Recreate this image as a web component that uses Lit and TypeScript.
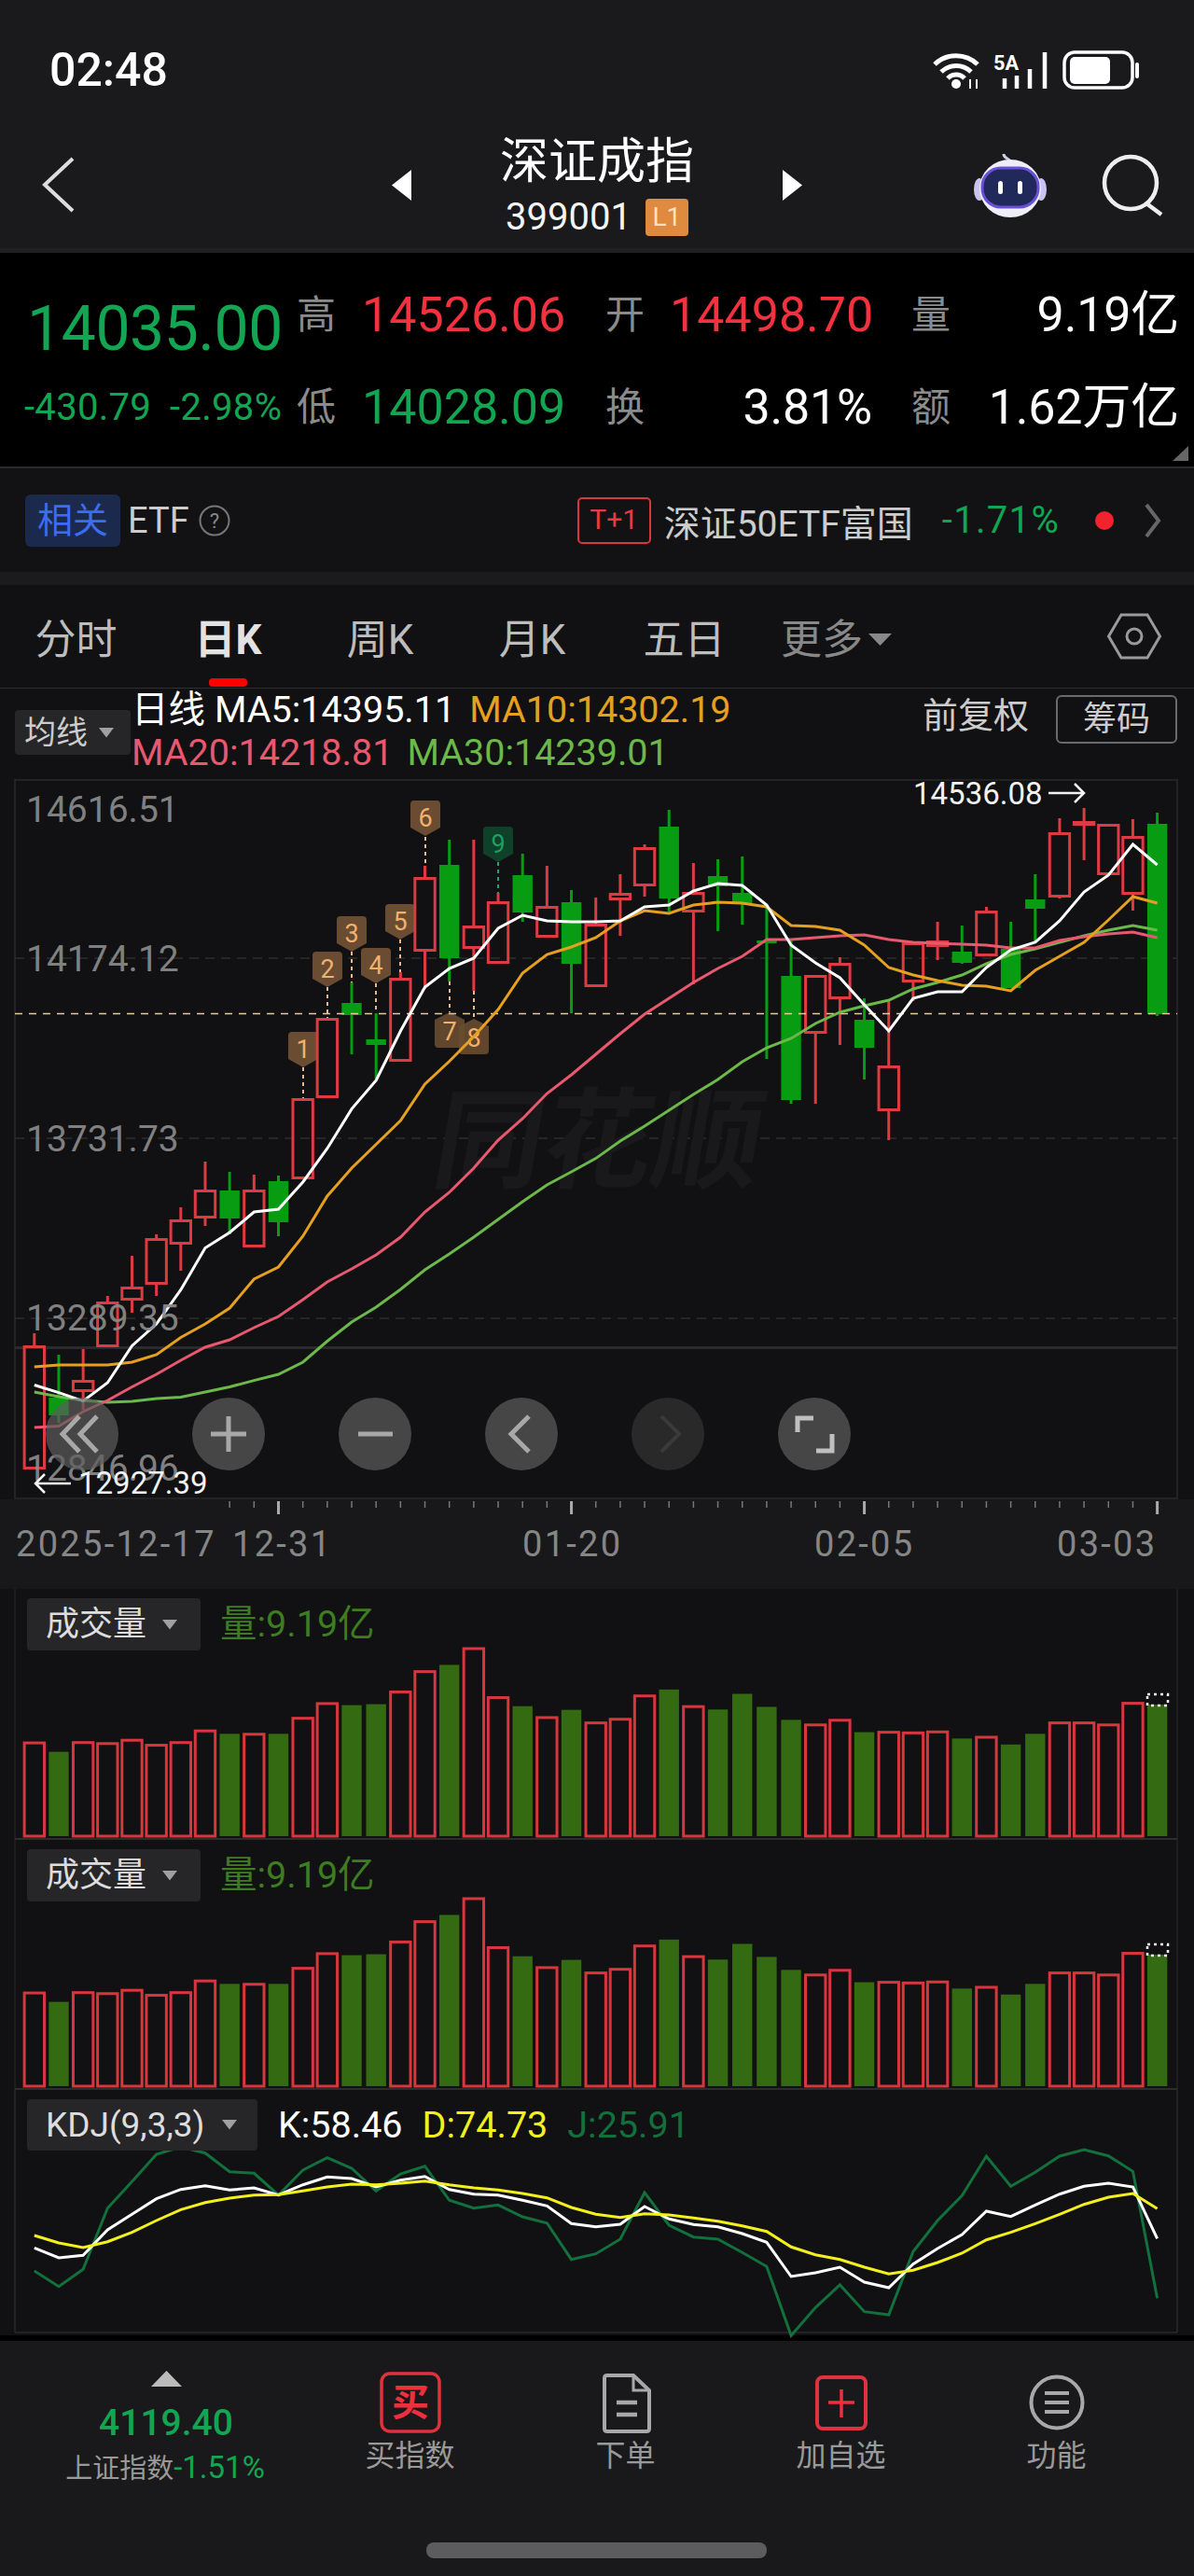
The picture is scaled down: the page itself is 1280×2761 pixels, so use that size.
import { LitElement, html, css, svg } from "lit";
import { customElement } from "lit/decorators.js";

const RED = "#dd3a41";
const GREEN = "#079c12";
const VOL_GREEN = "#336a12";
const X = (i: number) => 36.8 + 26.17 * i;

// [isRed, wickTop, bodyTop, bodyBottom, wickBottom]
const candles: [number, number, number, number, number][] = [
  [1, 1429, 1442, 1575, 1575], [0, 1452, 1498, 1517, 1525], [1, 1446, 1479, 1492, 1511], [1, 1389, 1395, 1444, 1444],
  [1, 1346, 1379, 1394, 1407], [1, 1323, 1327, 1377, 1389], [1, 1294, 1307, 1334, 1362], [1, 1245, 1275, 1306, 1314],
  [0, 1256, 1276, 1306, 1323], [1, 1259, 1275, 1337, 1337], [0, 1260, 1266, 1310, 1325], [1, 1177, 1177, 1264, 1264],
  [1, 1091, 1091, 1177, 1177], [0, 1053, 1075, 1088, 1130], [0, 1086, 1114, 1120, 1156], [1, 1042, 1048, 1138, 1138],
  [1, 928, 940, 1020, 1060], [0, 900, 927, 1027, 1052], [1, 900, 992, 1017, 1062], [1, 957, 966, 1033, 1033],
  [0, 915, 938, 978, 988], [1, 928, 971, 1005, 1005], [0, 954, 967, 1033, 1086], [1, 962, 990, 1058, 1058],
  [1, 937, 957, 965, 1003], [1, 905, 908, 950, 961], [0, 868, 886, 963, 977], [1, 925, 956, 978, 1055],
  [0, 921, 939, 950, 998], [0, 918, 957, 968, 991], [0, 970, 1008, 1011, 1135], [0, 1007, 1046, 1179, 1183],
  [1, 1045, 1045, 1108, 1183], [1, 1026, 1032, 1071, 1120], [0, 1070, 1093, 1123, 1157], [1, 1073, 1142, 1191, 1222],
  [1, 1010, 1010, 1053, 1073], [1, 988, 1008, 1015, 1029], [0, 992, 1020, 1032, 1033], [1, 972, 976, 1025, 1025],
  [0, 988, 1017, 1059, 1059], [0, 937, 964, 974, 1010], [1, 877, 892, 962, 963], [1, 866, 880, 885, 922],
  [1, 883, 883, 938, 938], [1, 878, 896, 959, 976], [0, 871, 883, 1087, 1089],
];

const ma5 = [1484.5, 1492.6, 1501.6, 1482, 1442.4, 1419, 1382.4, 1337.5, 1321, 1299, 1296, 1267, 1231, 1188.6, 1158, 1105, 1058, 1038, 1027, 995, 981, 987, 988, 988, 987, 972, 970, 955, 947, 949, 970, 1013, 1032, 1048, 1077, 1105, 1070, 1063, 1063, 1037, 1018, 1010, 987, 956, 938, 905, 927];
const ma10 = [1465, 1463, 1463, 1463, 1460, 1452, 1433.5, 1419, 1402, 1371, 1358, 1325, 1282, 1252, 1226.5, 1201, 1162, 1137.5, 1111, 1082, 1043, 1023, 1015, 1005, 987, 976, 979, 970, 967, 968, 972, 992, 993, 997, 1013, 1037, 1045, 1051, 1056, 1057, 1062, 1040, 1025, 1010, 986, 961, 968];
const ma20 = [1530, 1528.6, 1513, 1501, 1486.5, 1473, 1458, 1444, 1436, 1423, 1411, 1393, 1374, 1360, 1345, 1326, 1299, 1278, 1252, 1222, 1199, 1172, 1152, 1130, 1108, 1087, 1070, 1053, 1038, 1025, 1007, 1007, 1005, 1003, 1002, 1007, 1010, 1011, 1012, 1013, 1016, 1016, 1008, 1004, 1001, 999, 1005];
const ma30 = [1492, 1497, 1501, 1503, 1502, 1499, 1497.5, 1492, 1486.5, 1479.6, 1473, 1460, 1437.5, 1417, 1401, 1382, 1361, 1344, 1326, 1307, 1288, 1270, 1256, 1241.6, 1223, 1207, 1190, 1173, 1157, 1138, 1123, 1113, 1097, 1085, 1078, 1072, 1060, 1053, 1045, 1033, 1023, 1017, 1010, 1003, 997, 992, 997];

// bar tops as read off the crop, base line = 750 at 2.8x
const volTops = [466, 497, 465, 468, 458, 473, 465, 430, 443, 440, 443, 392, 348, 357, 354, 313, 252, 236, 183, 330, 360, 390, 371, 406, 395, 325, 310, 357, 370, 323, 362, 401, 412, 398, 438, 434, 436, 433, 457, 449, 475, 443, 406, 406, 412, 347, 355];

const kLine = [508, 540, 532, 450, 400, 350, 320, 308, 322, 315, 338, 305, 280, 285, 312, 290, 278, 320, 335, 338, 355, 373, 430, 440, 432, 375, 415, 433, 440, 462, 490, 600, 588, 570, 618, 636, 560, 510, 465, 390, 407, 370, 335, 310, 300, 312, 478];
const dLine = [468, 492, 507, 488, 458, 420, 385, 362, 348, 338, 337, 325, 312, 303, 305, 300, 293, 305, 315, 322, 333, 347, 378, 400, 410, 398, 402, 412, 422, 437, 455, 505, 530, 545, 570, 592, 580, 555, 525, 482, 458, 430, 400, 368, 345, 333, 382];
const jLine = [582, 632, 577, 380, 295, 207, 183, 203, 263, 268, 338, 258, 218, 252, 325, 270, 245, 355, 380, 370, 408, 428, 545, 527, 480, 330, 435, 473, 480, 523, 568, 790, 700, 627, 713, 723, 520, 420, 340, 213, 310, 265, 213, 192, 212, 262, 670];

// label, centre x, top y, pointing up?, dotted line from/to
const tags: { t: string; x: number; y: number; up?: boolean; green?: boolean; d: [number, number] }[] = [
  { t: "1", x: 325, y: 1106, d: [1144, 1177] },
  { t: "2", x: 351, y: 1020, d: [1058, 1091] },
  { t: "3", x: 377, y: 982, d: [1020, 1053] },
  { t: "4", x: 403, y: 1016, d: [1054, 1086] },
  { t: "5", x: 429, y: 969, d: [1007, 1042] },
  { t: "6", x: 456, y: 858, d: [897, 928] },
  { t: "7", x: 482, y: 1085, up: true, d: [1052, 1085] },
  { t: "8", x: 508, y: 1092, up: true, d: [1062, 1092] },
  { t: "9", x: 534, y: 886, green: true, d: [924, 957] },
];

const axisLabels: [string, number][] = [["14616.51", 881], ["14174.12", 1041], ["13731.73", 1234], ["13289.35", 1426], ["12846.96", 1587]];
const gridYs = [1027, 1220, 1413];
const dates: [string, number][] = [["2025-12-17", 17], ["12-31", 249], ["01-20", 560], ["02-05", 873], ["03-03", 1133]];

const linePts = (ys: number[]) => ys.map((y, i) => `${X(i).toFixed(1)},${y}`).join(" ");
const tagPath = (cx: number, y: number, up?: boolean) => {
  const l = cx - 16, r = cx + 16;
  return up
    ? `M${cx} ${y}L${r} ${y + 8}V${y + 34}q0 4 -4 4H${l + 4}q-4 0 -4 -4V${y + 8}Z`
    : `M${l + 4} ${y}H${r - 4}q4 0 4 4V${y + 29}L${cx} ${y + 38}L${l} ${y + 29}V${y + 4}q0 -4 4 -4Z`;
};

@customElement("app-root")
export class AppRoot extends LitElement {
  static styles = css`
    :host {
      display: block;
      width: 1280px;
      height: 2761px;
      overflow: hidden;
      background: #111113;
      font-family: Roboto, "Noto Sans CJK SC", sans-serif;
      color: #ddd;
    }
    svg { display: block; overflow: visible; }
    svg text { font-family: Roboto, "Noto Sans CJK SC", sans-serif; }

    /* top bar */
    .top { height: 271px; background: #1a1a1c; box-sizing: border-box; border-bottom: 5px solid #202022; }
    .status { height: 130px; padding: 10px 58px 0 53px; display: flex; align-items: center; justify-content: space-between; }
    .time { font-size: 50px; font-weight: 500; color: #fff; }
    .nav { display: grid; grid-template-columns: 1fr 440px 1fr; align-items: center; height: 116px; padding: 0 33px; }
    .back { margin-left: 12px; }
    .nav-r { display: flex; justify-content: flex-end; gap: 59px; align-items: center; }
    .mid { display: flex; justify-content: space-between; align-items: center; }
    .title { text-align: center; }
    .title h1 { margin: 0 0 7px; font-size: 52px; line-height: 62px; font-weight: 400; color: #fff; }
    .code { display: flex; align-items: center; justify-content: center; gap: 15px; font-size: 40px; line-height: 42px; color: #f4f4f4; }
    .lvl { width: 46px; height: 40px; background: #df8a3e; border-radius: 4px; font-size: 28px; line-height: 40px; text-align: center; color: #f9dfc4; }

    /* quote block */
    .quote { height: 231px; box-sizing: border-box; background: #000; border-bottom: 2px solid #2a2a2c; position: relative; display: flex; }
    .quote-l { width: 318px; box-sizing: border-box; padding: 44px 0 0 29px; color: #13a652; }
    .last { font-size: 66px; line-height: 76px; letter-spacing: -0.4px; }
    .chg { font-size: 40px; line-height: 46px; margin: 23px 0 0 -3px; display: flex; gap: 20px; letter-spacing: 0.3px; white-space: nowrap; }
    .grid { display: grid; grid-template-columns: 70px 261px 69px 259px 60px 227px; grid-auto-rows: 99px; padding-top: 42px; font-size: 52px; line-height: 50px; }
    .grid .lab { font-size: 42px; color: #8b8b8b; }
    .grid .r { color: #f2323f; }
    .grid .g { color: #13a652; }
    .grid .w { color: #fff; }
    .w.end { text-align: right; width: 217px; }
    .w.far { text-align: right; }
    .far, .end { letter-spacing: -0.2px; }
    .corner { position: absolute; right: 6px; bottom: 6px; }

    /* etf row */
    .etf { height: 111px; background: #121214; display: flex; align-items: center; padding: 0 35px 0 27px; font-size: 38px; color: #ccc; }
    .rel { width: 102px; height: 56px; line-height: 56px; text-align: center; background: #1b2a4c; color: #3c6cf0; border-radius: 6px; margin-right: 8px; }
    .help { margin-left: 10px; }
    .etf-r { margin-left: auto; display: flex; align-items: center; font-size: 39px; }
    .t1 { width: 79px; height: 50px; box-sizing: border-box; border: 2.5px solid #dc3540; border-radius: 5px; color: #e83a44; font-size: 30px; line-height: 44px; text-align: center; margin-right: 14px; }
    .etf-chg { color: #13a652; margin-left: 31px; font-size: 40px; letter-spacing: 1.3px; }
    .dot { width: 20px; height: 20px; border-radius: 50%; background: #f3222f; margin: 0 33px 0 38px; }
    .sep { height: 14px; background: #1b1b1d; }

    /* period tabs */
    .tabs { height: 111px; box-sizing: border-box; border-bottom: 1.5px solid #303032; display: flex; align-items: center; padding-right: 35px; font-size: 44px; color: #bdbdbd; }
    .tab { width: 163px; text-align: center; position: relative; height: 100%; line-height: 118px; flex: none; }
    .tab.on { font-weight: 700; color: #e2e2e2; }
    .tab.on::after { content: ""; position: absolute; left: 61px; bottom: 1px; width: 41px; height: 9px; border-radius: 4px; background: #f00; }
    .tab.more { color: #888; display: flex; justify-content: center; align-items: center; gap: 6px; box-sizing: border-box; padding-top: 7px; }
    .hex { margin-left: auto; }

    /* moving average row */
    .ma { height: 97px; display: flex; align-items: flex-start; font-size: 39.5px; line-height: 46px; }
    .pick { background: #262628; border-radius: 4px; color: #ccc; display: flex; align-items: center; font-size: 34px; box-sizing: border-box; }
    .pick-ma { width: 124px; height: 48px; margin: 23px 0 0 16px; padding-left: 10px; gap: 12px; }
    .legend { margin-left: 1px; white-space: nowrap; }
    .legend span + span { margin-left: 15px; }
    .legend .ma5 { margin-left: 10px; }
    .c5 { color: #fff; } .c10 { color: #e6a020; } .c20 { color: #e8586f; } .c30 { color: #6cb84a; }
    .fq { margin-left: auto; display: flex; padding-right: 18px; color: #ccc; font-size: 38px; }
    .fq b { font-weight: 400; margin: 6px 29px 0 0; }
    .chip { width: 130px; height: 52px; box-sizing: border-box; border: 2px solid #6a6a6a; border-radius: 6px; font-size: 36px; line-height: 48px; text-align: center; margin-top: 7px; }

    /* charts */
    .chart { position: relative; height: 772px; }
    .btns { position: absolute; left: 49px; top: 663px; display: flex; gap: 79px; }
    .btn { width: 78px; height: 78px; border-radius: 50%; background: rgba(92, 92, 92, 0.7); }
    .btn.off { background: rgba(92, 92, 92, 0.32); }
    .axis { height: 96px; background: #18181a; position: relative; }
    .axis .d { position: absolute; top: 25px; font-size: 38px; line-height: 46px; letter-spacing: 2.3px; color: #868686; }
    .panel { position: relative; background: #111113; }
    .head { position: absolute; left: 29px; top: 10px; display: flex; align-items: center; font-size: 39.5px; line-height: 46px; }
    .pick-vol { width: 186px; height: 56px; padding-left: 20px; gap: 17px; font-size: 36px; color: #ddd; margin-right: 21px; }
    .pick-kdj { width: 247px; height: 55px; padding-left: 20px; gap: 19px; font-size: 37px; color: #ddd; margin-right: 22px; }
    .vol-txt { color: #3d7d20; }
    .kdj span { margin-right: 21px; }
    .k { color: #fff; } .dd { color: #f4f01e; } .j { color: #12703c; }
    .gap { height: 6px; background: #000; }

    /* bottom nav */
    .bar { height: 252px; background: #19191b; position: relative; display: grid; grid-template-columns: 324px repeat(4, 231px); align-items: start; }
    .idx { padding: 32px 0 0 32px; display: flex; flex-direction: column; align-items: center; }
    .idx .v { font-size: 39px; line-height: 44px; margin-top: 17px; color: #13a652; font-weight: 500; }
    .idx .s { font-size: 29px; line-height: 34px; margin: 9px 0 0 -2px; color: #999; white-space: nowrap; }
    .idx .s i { font-style: normal; color: #13a652; font-size: 33px; }
    .item { padding-top: 33px; display: flex; flex-direction: column; align-items: center; color: #999; font-size: 32px; line-height: 38px; }
    .item svg { margin-bottom: 5px; }
    .home { position: absolute; left: 457px; bottom: 19px; width: 365px; height: 17px; border-radius: 8px; background: #5c5c5c; }
  `;

  private arrow() {
    return html`<svg width="16" height="11" viewBox="0 0 16 11"><path d="M0 0H20L10 13Z" transform="scale(.8)" fill="#a0a0a0"/></svg>`;
  }

  private mainChart() {
    return html`<svg width="1280" height="772" viewBox="0 835 1280 772">
      <path d="M16 836H1262M16 835V1607M1262 835V1607M16 1606H1262" stroke="#29292b" stroke-width="1.5" fill="none"/>
      ${gridYs.map((y) => svg`<line x1="16" x2="1262" y1=${y} y2=${y} stroke="#2e2e2e" stroke-width="1.5" stroke-dasharray="10 7"/>`)}
      <line x1="16" x2="1262" y1="1444.5" y2="1444.5" stroke="#2b2b2d" stroke-width="3"/>
      <text x="457" y="1264" font-size="117" font-weight="700" fill="#19191b" transform="translate(226 0) skewX(-10)" style="font-family:'Noto Sans CJK SC'">同花顺</text>
      ${tags.map((t) => svg`
        <line x1=${t.x} x2=${t.x} y1=${t.d[0]} y2=${t.d[1]} stroke=${t.green ? "#2f9d68" : "#e8b98a"} stroke-width="2" stroke-dasharray="4 4"/>
        <path d=${tagPath(t.x, t.y, t.up)} fill=${t.green ? "#0f4029" : "#694c31"} opacity=${t.up ? 0.9 : 1}/>
        <text x=${t.x} y=${t.y + (t.up ? 30 : 28)} font-size="27" text-anchor="middle" fill=${t.green ? "#1f9f60" : "#f3b06c"}>${t.t}</text>`)}
      ${candles.map(([up, wt, bt, bb, wb], i) => {
        const x = X(i);
        const c = up ? RED : GREEN;
        return svg`
          <line x1=${x} x2=${x} y1=${wt} y2=${bt} stroke=${c} stroke-width="3"/>
          <line x1=${x} x2=${x} y1=${bb} y2=${wb} stroke=${c} stroke-width="3"/>
          ${up
            ? svg`<rect x=${x - 10.7} y=${bt + 1.5} width="21.4" height=${Math.max(bb - bt - 3, 1)} fill="none" stroke=${c} stroke-width="3"/>`
            : svg`<rect x=${x - 10.7} y=${bt} width="21.4" height=${bb - bt} fill=${c}/>`}`;
      })}
      <line x1="16" x2="1262" y1="1086.5" y2="1086.5" stroke="#e6c9a0" stroke-width="1.6" stroke-dasharray="8 7"/>
      <polyline points=${linePts(ma30)} fill="none" stroke="#6cb84a" stroke-width="3"/>
      <polyline points=${linePts(ma20)} fill="none" stroke="#e8586f" stroke-width="3"/>
      <polyline points=${linePts(ma10)} fill="none" stroke="#e6a020" stroke-width="3"/>
      <polyline points=${linePts(ma5)} fill="none" stroke="#fff" stroke-width="3"/>
      ${axisLabels.map(([t, y]) => svg`<text x="28" y=${y} font-size="39" fill="#8c8c8c" fill-opacity=".92">${t}</text>`)}
      <text x="979" y="862" font-size="33" fill="#f2f2f2">14536.08</text>
      <path d="M1124 850H1162M1152 840L1162 850L1152 860" stroke="#f2f2f2" stroke-width="2.5" fill="none"/>
      <text x="84" y="1601" font-size="33" fill="#f2f2f2">12927.39</text>
      <path d="M76 1590H38M48 1580L38 1590L48 1600" stroke="#f2f2f2" stroke-width="2.5" fill="none"/>
    </svg>`;
  }

  private volPanel(h: number, top: number) {
    // viewBox is local to the panel: base of the bars sits at `h - 4`
    const base = h - 4;
    return html`<svg width="1280" height=${h} viewBox="0 0 1280 ${h}">
      <path d="M16 0V${h}M1262 0V${h}" stroke="#222224" stroke-width="1.5"/>
      <line x1="16" x2="1262" y1=${h - 1} y2=${h - 1} stroke="#2c2e2a" stroke-width="2"/>
      ${volTops.map((t, i) => {
        const x = X(i);
        const hh = (750 - t) / 2.8;
        return candles[i][0]
          ? svg`<rect x=${x - 10.7} y=${base - hh + 1.5} width="21.4" height=${hh - 1.5} fill="none" stroke="#d8363f" stroke-width="3"/>`
          : svg`<rect x=${x - 10.7} y=${base - hh} width="21.4" height=${hh} fill=${VOL_GREEN}/>`;
      })}
      <rect x="1230" y=${top} width="22" height="12" fill="none" stroke="#fff" stroke-width="2.5" stroke-dasharray="3 4"/>
    </svg>`;
  }

  private kdjChart() {
    const pts = (a: number[]) => a.map((z, i) => `${X(i).toFixed(1)},${(z / 3).toFixed(1)}`).join(" ");
    return html`<svg width="1280" height="263" viewBox="0 0 1280 263">
      <path d="M16 0V260M1262 0V260M16 260H1262" stroke="#29292b" stroke-width="1.5" fill="none"/>
      <polyline points=${pts(jLine)} fill="none" stroke="#12703c" stroke-width="3"/>
      <polyline points=${pts(kLine)} fill="none" stroke="#fff" stroke-width="3"/>
      <polyline points=${pts(dLine)} fill="none" stroke="#f4f01e" stroke-width="3"/>
    </svg>`;
  }

  render() {
    return html`
      <div class="top">
        <div class="status">
          <span class="time">02:48</span>
          <svg width="222" height="42" viewBox="1000 55 222 42">
            <g fill="none" stroke="#fff" stroke-width="5">
              <path d="M1002 70A33 33 0 0 1 1048 70"/>
              <path d="M1009 78A23 23 0 0 1 1041 78"/>
              <path d="M1016 85A12 12 0 0 1 1034 85"/>
            </g>
            <circle cx="1025" cy="91" r="5" fill="#fff"/>
            <path d="M1040 86V96M1047 86V96" stroke="#fff" stroke-width="2"/>
            <text x="1065" y="76" font-size="22" font-weight="700" fill="#fff" textLength="27" lengthAdjust="spacingAndGlyphs">5A</text>
            <path d="M1077 85V96M1090 82V96M1104 75V96M1120 57V96" stroke="#fff" stroke-width="4.5"/>
            <rect x="1141" y="57" width="73" height="38" rx="11" fill="none" stroke="#fff" stroke-width="3.5"/>
            <rect x="1147" y="62" width="43" height="29" rx="5" fill="#fff"/>
            <path d="M1219 70V83" stroke="#fff" stroke-width="4" stroke-linecap="round"/>
          </svg>
        </div>
        <div class="nav">
          <svg class="back" width="36" height="60" viewBox="0 0 36 60"><path d="M33 2L3 30L33 58" fill="none" stroke="#ddd" stroke-width="4"/></svg>
          <div class="mid">
            <svg width="21" height="33" viewBox="0 0 21 33"><path d="M21 0V33L0 16.5Z" fill="#fff"/></svg>
            <div class="title">
              <h1>深证成指</h1>
              <div class="code"><span>399001</span><span class="lvl">L1</span></div>
            </div>
            <svg width="21" height="33" viewBox="0 0 21 33"><path d="M0 0V33L21 16.5Z" fill="#fff"/></svg>
          </div>
          <div class="nav-r">
            <svg width="78" height="70" viewBox="0 0 78 70">
              <path d="M39 10C37 6 32 7 32 2" fill="none" stroke="#cfd0e8" stroke-width="3"/>
              <ellipse cx="6" cy="40" rx="6" ry="12" fill="#c9c4ee"/>
              <ellipse cx="72" cy="40" rx="6" ry="12" fill="#c9c4ee"/>
              <ellipse cx="39" cy="39" rx="33" ry="31" fill="#eeeefa"/>
              <rect x="9" y="17" width="60" height="42" rx="20" fill="#20295a" stroke="#6a50d8" stroke-width="3"/>
              <rect x="26" y="31" width="5" height="14" rx="2.5" fill="#fff"/>
              <rect x="47" y="31" width="5" height="14" rx="2.5" fill="#fff"/>
            </svg>
            <svg width="66" height="64" viewBox="0 0 66 64">
              <circle cx="31" cy="30" r="28" fill="none" stroke="#eee" stroke-width="4.5"/>
              <path d="M48 52L64 64" stroke="#eee" stroke-width="4.5"/>
            </svg>
          </div>
        </div>
      </div>

      <div class="quote">
        <div class="quote-l">
          <div class="last">14035.00</div>
          <div class="chg"><span>-430.79</span><span>-2.98%</span></div>
        </div>
        <div class="grid">
          <span class="lab">高</span><span class="r">14526.06</span>
          <span class="lab">开</span><span class="r">14498.70</span>
          <span class="lab">量</span><span class="w far">9.19亿</span>
          <span class="lab">低</span><span class="g">14028.09</span>
          <span class="lab">换</span><span class="w end">3.81%</span>
          <span class="lab">额</span><span class="w far">1.62万亿</span>
        </div>
        <svg class="corner" width="17" height="16" viewBox="0 0 17 16"><path d="M17 0V16H0Z" fill="#666"/></svg>
      </div>

      <div class="etf">
        <span class="rel">相关</span>
        <span>ETF</span>
        <svg class="help" width="34" height="34" viewBox="0 0 34 34">
          <circle cx="17" cy="17" r="15.5" fill="none" stroke="#777" stroke-width="2"/>
          <text x="17" y="25" font-size="22" text-anchor="middle" fill="#888">?</text>
        </svg>
        <div class="etf-r">
          <span class="t1">T+1</span>
          <span>深证50ETF富国</span>
          <span class="etf-chg">-1.71%</span>
          <span class="dot"></span>
          <svg width="18" height="36" viewBox="0 0 18 36"><path d="M2 1L15 18L2 35" fill="none" stroke="#666" stroke-width="4"/></svg>
        </div>
      </div>
      <div class="sep"></div>

      <div class="tabs">
        <span class="tab">分时</span>
        <span class="tab on">日K</span>
        <span class="tab">周K</span>
        <span class="tab">月K</span>
        <span class="tab">五日</span>
        <span class="tab more">更多<svg width="25" height="13" viewBox="0 0 25 13"><path d="M0 0H25L12.5 13Z" fill="#888"/></svg></span>
        <svg class="hex" width="58" height="50" viewBox="0 0 58 50">
          <path d="M1.5 25L15 2H43L56.5 25L43 48H15Z" fill="none" stroke="#9a9a9a" stroke-width="3"/>
          <circle cx="29" cy="25" r="8" fill="none" stroke="#9a9a9a" stroke-width="3"/>
        </svg>
      </div>

      <div class="ma">
        <div class="pick pick-ma">均线${this.arrow()}</div>
        <div class="legend">
          <div><span class="c5">日线</span><span class="c5 ma5">MA5:14395.11</span><span class="c10">MA10:14302.19</span></div>
          <div><span class="c20">MA20:14218.81</span><span class="c30">MA30:14239.01</span></div>
        </div>
        <div class="fq"><b>前复权</b><span class="chip">筹码</span></div>
      </div>

      <div class="chart">
        ${this.mainChart()}
        <div class="btns">
          <div class="btn"><svg width="78" height="78" viewBox="0 0 78 78"><path d="M36 20L18 39L36 58M55 20L37 39L55 58" fill="none" stroke="#a8a8a8" stroke-width="5"/></svg></div>
          <div class="btn"><svg width="78" height="78" viewBox="0 0 78 78"><path d="M20 39H58M39 20V58" fill="none" stroke="#a8a8a8" stroke-width="5"/></svg></div>
          <div class="btn"><svg width="78" height="78" viewBox="0 0 78 78"><path d="M21 39H58" fill="none" stroke="#a8a8a8" stroke-width="5"/></svg></div>
          <div class="btn"><svg width="78" height="78" viewBox="0 0 78 78"><path d="M47 20L28 39L47 58" fill="none" stroke="#a8a8a8" stroke-width="5"/></svg></div>
          <div class="btn off"><svg width="78" height="78" viewBox="0 0 78 78"><path d="M32 20L51 39L32 58" fill="none" stroke="#3a3a3a" stroke-width="4"/></svg></div>
          <div class="btn"><svg width="78" height="78" viewBox="0 0 78 78"><path d="M21 37V22H38M58 39V57H41" fill="none" stroke="#c0c0c0" stroke-width="5"/></svg></div>
        </div>
      </div>

      <div class="axis">
        <svg width="1280" height="20" viewBox="0 0 1280 20">
          ${candles.map((_, i) => {
            if (i < 8) return null;
            const major = (i - 10) % 12 === 0;
            return svg`<line x1=${X(i)} x2=${X(i)} y1="2" y2=${major ? 16 : 9} stroke=${major ? "#aaa" : "#777"} stroke-width=${major ? 3 : 1.5}/>`;
          })}
        </svg>
        ${dates.map(([t, x]) => html`<span class="d" style="left:${x}px">${t}</span>`)}
      </div>

      <div class="panel" style="height:269px">
        ${this.volPanel(269, 113)}
        <div class="head">
          <div class="pick pick-vol">成交量${this.arrow()}</div>
          <span class="vol-txt">量:9.19亿</span>
        </div>
      </div>
      <div class="panel" style="height:268px">
        ${this.volPanel(268, 112)}
        <div class="head">
          <div class="pick pick-vol">成交量${this.arrow()}</div>
          <span class="vol-txt">量:9.19亿</span>
        </div>
      </div>
      <div class="panel" style="height:263px">
        ${this.kdjChart()}
        <div class="head kdj">
          <div class="pick pick-kdj">KDJ(9,3,3)${this.arrow()}</div>
          <span class="k">K:58.46</span><span class="dd">D:74.73</span><span class="j">J:25.91</span>
        </div>
      </div>
      <div class="gap"></div>

      <div class="bar">
        <div class="idx">
          <svg width="33" height="17" viewBox="0 0 33 17"><path d="M16.5 0L33 17H0Z" fill="#bbb"/></svg>
          <div class="v">4119.40</div>
          <div class="s">上证指数<i>-1.51%</i></div>
        </div>
        <div class="item">
          <svg width="66" height="66" viewBox="0 0 66 66">
            <rect x="2" y="2" width="62" height="62" rx="9" fill="none" stroke="#e0323e" stroke-width="3.5"/>
            <text x="33" y="47" font-size="40" font-weight="700" text-anchor="middle" fill="#ee2f3e">买</text>
          </svg>
          <span>买指数</span>
        </div>
        <div class="item">
          <svg width="66" height="66" viewBox="0 0 66 66">
            <path d="M10 7Q10 4 13 4H41L58 20V61Q58 64 55 64H13Q10 64 10 61Z" fill="none" stroke="#a8a8a8" stroke-width="4"/>
            <path d="M41 4V20H58" fill="none" stroke="#a8a8a8" stroke-width="3"/>
            <path d="M23 33H45M23 46H45" stroke="#a8a8a8" stroke-width="4.5"/>
          </svg>
          <span>下单</span>
        </div>
        <div class="item">
          <svg width="66" height="66" viewBox="0 0 66 66">
            <rect x="7" y="6" width="52" height="55" rx="6" fill="none" stroke="#e0323e" stroke-width="4"/>
            <path d="M19 33H47M33 19V49" stroke="#ee2f3e" stroke-width="3.5"/>
          </svg>
          <span>加自选</span>
        </div>
        <div class="item">
          <svg width="66" height="66" viewBox="0 0 66 66">
            <circle cx="33" cy="33" r="27.5" fill="none" stroke="#a8a8a8" stroke-width="4"/>
            <path d="M20 23H46M20 33H46M20 43H46" stroke="#a8a8a8" stroke-width="4"/>
          </svg>
          <span>功能</span>
        </div>
        <div class="home"></div>
      </div>
    `;
  }
}
